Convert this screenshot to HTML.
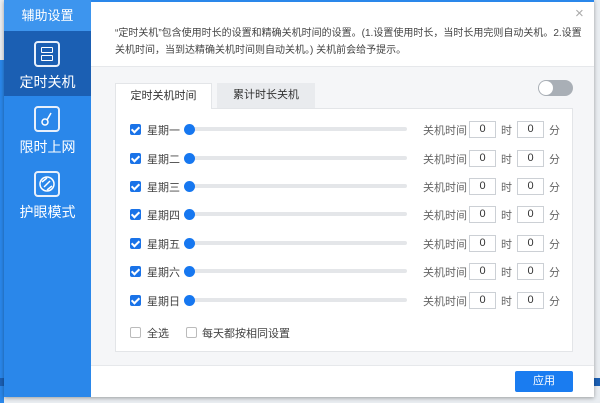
<!DOCTYPE html>
<html><head><meta charset="utf-8"><style>
*{margin:0;padding:0;box-sizing:border-box}
body{width:600px;height:403px;overflow:hidden;background:#e9edf1;position:relative;font-family:"Liberation Sans","Noto Sans CJK SC",sans-serif;font-size:12px;color:#555}
.abs{position:absolute}
.win{left:4px;top:0;width:590px;height:397px;background:#fff;box-shadow:0 1px 4px rgba(0,0,0,.35)}
.side{left:4px;top:0;width:87px;height:397px;background:#2a87ea}
.sh{left:4px;top:0;width:87px;height:31px;background:#3d95ee;color:#fff;font-size:13px;text-align:center;line-height:31px}
.sel{left:4px;top:31px;width:87px;height:65px;background:#1b5fb3}
.it{color:#fff;font-size:14px;width:87px;left:4px;text-align:center}
.ic{width:26px;height:26px;border:2px solid #e8f0fb;border-radius:4px;left:34px}
.body{left:91px;top:66px;width:503px;height:300px;background:#f5f6f8;border-top:1px solid #e6e8eb;border-bottom:1px solid #e6e8eb}
.box{left:115px;top:108px;width:458px;height:244px;background:#fff;border:1px solid #e3e5e8}
.cb{width:11px;height:11px;background:#1a73e8;border-radius:2px;left:130px}
.cb:after{content:"";position:absolute;left:3px;top:1px;width:3px;height:6px;border:solid #fff;border-width:0 2px 2px 0;transform:rotate(45deg)}
.lbl{left:147px;font-size:11px;color:#444}
.track{left:190px;width:217px;height:4px;background:#e4e6e9;border-radius:2px}
.dot{left:184px;width:11px;height:11px;border-radius:50%;background:#1677f0}
.inp{width:27px;height:17px;border:1px solid #ccd0d5;text-align:center;line-height:15px;font-size:11px;color:#333;background:#fff}
.t{font-size:11px;color:#666}
.ucb{width:11px;height:11px;border:1px solid #bbb;border-radius:2px;background:#fff}
</style></head><body>
<div class="abs" style="left:0;top:60px;width:4px;height:343px;background:#2a87ea"></div>
<div class="abs" style="left:0;top:378px;width:600px;height:8px;background:#1b5fb3"></div>
<div class="abs win"></div>
<div class="abs" style="left:91px;top:0;width:503px;height:2px;background:#2a87ea"></div>
<div class="abs side"></div>
<div class="abs sh">辅助设置</div>
<div class="abs sel"></div>
<div class="abs ic" style="top:41px"><div class="abs" style="left:5px;top:4px;width:12px;height:6px;border:1.5px solid #fff;border-radius:1px"></div><div class="abs" style="left:5px;top:12px;width:12px;height:6px;border:1.5px solid #fff;border-radius:1px"></div></div>
<div class="abs it" style="top:72px">定时关机</div>
<div class="abs ic" style="top:106px"><svg width="22" height="22" viewBox="0 0 22 22"><circle cx="9" cy="14" r="3" fill="none" stroke="#fff" stroke-width="1.5"/><path d="M11 12L15 5" stroke="#fff" stroke-width="1.5"/></svg></div>
<div class="abs it" style="top:137px">限时上网</div>
<div class="abs ic" style="top:171px"><svg width="22" height="22" viewBox="0 0 22 22"><circle cx="11" cy="11" r="7" fill="none" stroke="#fff" stroke-width="1.5"/><path d="M6 9L11 5M16 13L11 17M8 14L14 8" stroke="#fff" stroke-width="1.5"/></svg></div>
<div class="abs it" style="top:202px">护眼模式</div>

<div class="abs" style="left:575px;top:5px;color:#aaa;font-size:15px">×</div>
<div class="abs" style="left:115px;top:25px;width:475px;font-size:10px;line-height:17px;color:#444">“定时关机”包含使用时长的设置和精确关机时间的设置。(1.设置使用时长，当时长用完则自动关机。2.设置关机时间，当到达精确关机时间则自动关机。) 关机前会给予提示。</div>
<div class="abs body"></div>
<div class="abs" style="left:115px;top:83px;width:97px;height:26px;background:#fff;border:1px solid #e3e5e8;border-bottom:none;text-align:center;line-height:25px;font-size:11px;color:#333;z-index:2">定时关机时间</div>
<div class="abs" style="left:217px;top:83px;width:98px;height:25px;background:#e9ebee;text-align:center;line-height:25px;font-size:11px;color:#333">累计时长关机</div>
<div class="abs" style="left:538px;top:80px;width:35px;height:16px;border-radius:8px;background:#a9afb6"><div class="abs" style="left:1px;top:1px;width:14px;height:14px;border-radius:50%;background:#fff"></div></div>
<div class="abs box"></div>

<div class="abs cb" style="top:124px"></div><div class="abs lbl" style="top:122px">星期一</div><div class="abs track" style="top:127px"></div><div class="abs dot" style="top:124px"></div><div class="abs t" style="left:423px;top:122px">关机时间</div><div class="abs inp" style="left:469px;top:121px">0</div><div class="abs t" style="left:501px;top:122px">时</div><div class="abs inp" style="left:517px;top:121px">0</div><div class="abs t" style="left:549px;top:122px">分</div>
<div class="abs cb" style="top:153px"></div><div class="abs lbl" style="top:151px">星期二</div><div class="abs track" style="top:156px"></div><div class="abs dot" style="top:153px"></div><div class="abs t" style="left:423px;top:151px">关机时间</div><div class="abs inp" style="left:469px;top:150px">0</div><div class="abs t" style="left:501px;top:151px">时</div><div class="abs inp" style="left:517px;top:150px">0</div><div class="abs t" style="left:549px;top:151px">分</div>
<div class="abs cb" style="top:181px"></div><div class="abs lbl" style="top:179px">星期三</div><div class="abs track" style="top:184px"></div><div class="abs dot" style="top:181px"></div><div class="abs t" style="left:423px;top:179px">关机时间</div><div class="abs inp" style="left:469px;top:178px">0</div><div class="abs t" style="left:501px;top:179px">时</div><div class="abs inp" style="left:517px;top:178px">0</div><div class="abs t" style="left:549px;top:179px">分</div>
<div class="abs cb" style="top:209px"></div><div class="abs lbl" style="top:207px">星期四</div><div class="abs track" style="top:212px"></div><div class="abs dot" style="top:209px"></div><div class="abs t" style="left:423px;top:207px">关机时间</div><div class="abs inp" style="left:469px;top:206px">0</div><div class="abs t" style="left:501px;top:207px">时</div><div class="abs inp" style="left:517px;top:206px">0</div><div class="abs t" style="left:549px;top:207px">分</div>
<div class="abs cb" style="top:238px"></div><div class="abs lbl" style="top:236px">星期五</div><div class="abs track" style="top:241px"></div><div class="abs dot" style="top:238px"></div><div class="abs t" style="left:423px;top:236px">关机时间</div><div class="abs inp" style="left:469px;top:235px">0</div><div class="abs t" style="left:501px;top:236px">时</div><div class="abs inp" style="left:517px;top:235px">0</div><div class="abs t" style="left:549px;top:236px">分</div>
<div class="abs cb" style="top:266px"></div><div class="abs lbl" style="top:264px">星期六</div><div class="abs track" style="top:269px"></div><div class="abs dot" style="top:266px"></div><div class="abs t" style="left:423px;top:264px">关机时间</div><div class="abs inp" style="left:469px;top:263px">0</div><div class="abs t" style="left:501px;top:264px">时</div><div class="abs inp" style="left:517px;top:263px">0</div><div class="abs t" style="left:549px;top:264px">分</div>
<div class="abs cb" style="top:295px"></div><div class="abs lbl" style="top:293px">星期日</div><div class="abs track" style="top:298px"></div><div class="abs dot" style="top:295px"></div><div class="abs t" style="left:423px;top:293px">关机时间</div><div class="abs inp" style="left:469px;top:292px">0</div><div class="abs t" style="left:501px;top:293px">时</div><div class="abs inp" style="left:517px;top:292px">0</div><div class="abs t" style="left:549px;top:293px">分</div>

<div class="abs ucb" style="left:130px;top:327px"></div><div class="abs lbl" style="left:147px;top:325px">全选</div>
<div class="abs ucb" style="left:186px;top:327px"></div><div class="abs lbl" style="left:202px;top:325px">每天都按相同设置</div>
<div class="abs" style="left:515px;top:371px;width:58px;height:21px;background:#1a7cf0;color:#fff;text-align:center;line-height:21px;font-size:11px;border-radius:2px">应用</div>
</body></html>
